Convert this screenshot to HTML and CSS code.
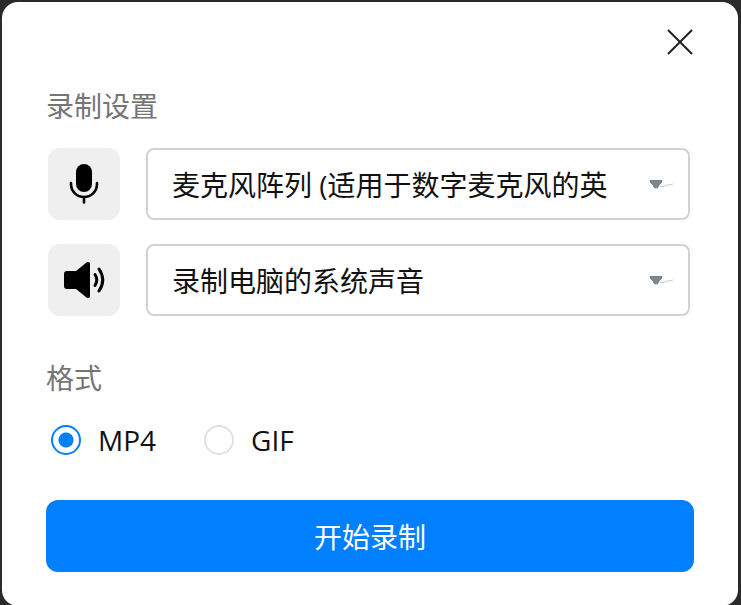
FILE: index.html
```
<!DOCTYPE html>
<html lang="zh-CN">
<head>
  <meta charset="UTF-8" />
  <meta name="viewport" content="width=device-width, initial-scale=1.0" />
  <title>录制设置</title>
  <link rel="stylesheet" href="styles.css">
</head>
<body>
  <form class="dialog">
    <div class="dialog-header">
      <button type="button" class="close" aria-label="关闭">
        <svg width="26" height="26" viewBox="0 0 26 26" fill="none" stroke="#222" stroke-width="2">
          <path d="M1 1L25 25M25 1L1 25" />
        </svg>
      </button>
    </div>

    <h2 class="title">录制设置</h2>

    <div class="row">
      <button type="button" class="icon-button" aria-label="麦克风">
        <svg width="72" height="72" viewBox="0 0 72 72">
          <rect x="28" y="16" width="16" height="28" rx="8" />
          <path d="M23 35V36C23 43.500 29 49 36 49S49 43.500 49 36V35M36 49V54.500" fill="none" stroke="#000" stroke-width="2.600" stroke-linecap="round" />
        </svg>
      </button>
      <div class="select-box">
        <select class="select" aria-label="麦克风设备">
          <option>麦克风阵列 (适用于数字麦克风的英特尔® 智音技术)</option>
        </select>
        <svg class="arrow" width="26" height="12" viewBox="0 0 26 12">
          <path d="M2 1H14V4H13V5H12V6H11V8H10V9H6V8H5V6H4V5H3V4H2Z" fill="#7d8791" />
          <path d="M1 1.500H2M14 1.500H15M6 9.500H10" stroke="#dfe2e4" />
          <path d="M12 7L15 7.500L20 6L25 5" fill="none" stroke="#c9cccf" />
        </svg>
      </div>
    </div>

    <div class="row">
      <button type="button" class="icon-button" aria-label="系统声音">
        <svg width="72" height="72" viewBox="0 0 72 72">
          <path d="M19 27H28L38.500 18.500C40 17.300 42 18 42 20V52C42 54 40 54.700 38.500 53.500L28 45H19C17 45 16 44 16 42V30C16 28 17 27 19 27Z" />
          <path d="M47 30.500Q50.500 36 47 41.500M51 25Q58.500 36 51 47" fill="none" stroke="#000" stroke-width="3" stroke-linecap="round" />
        </svg>
      </button>
      <div class="select-box">
        <select class="select" aria-label="声音来源">
          <option>录制电脑的系统声音</option>
        </select>
        <svg class="arrow" width="26" height="12" viewBox="0 0 26 12">
          <path d="M2 1H14V4H13V5H12V6H11V8H10V9H6V8H5V6H4V5H3V4H2Z" fill="#7d8791" />
          <path d="M1 1.500H2M14 1.500H15M6 9.500H10" stroke="#dfe2e4" />
          <path d="M12 7L15 7.500L20 6L25 5" fill="none" stroke="#c9cccf" />
        </svg>
      </div>
    </div>

    <h2 class="title title-format">格式</h2>

    <div class="formats">
      <label class="format" for="mp4">
        <input type="radio" id="mp4" name="format" value="mp4" checked />
        MP4
      </label>
      <label class="format" for="gif">
        <input type="radio" id="gif" name="format" value="gif" />
        GIF
      </label>
    </div>

    <button type="button" class="start">开始录制</button>
  </form>
</body>
</html>
```
FILE: styles.css
```
* {
  box-sizing: border-box;
}
body {
  margin: 0;
  padding: 2px 3px 0 2px;
  background-color: #2a2a2a;
  font-family: "Open Sans", "Noto Sans CJK SC", sans-serif;
  font-size: 28px;
  overflow: hidden;
}
.dialog {
  padding: 26px 44px 34px;
  background-color: white;
  border-radius: 16px;
}
.dialog-header {
  display: flex;
  justify-content: flex-end;
}
.close {
  display: flex;
  padding: 1px;
  background: none;
  border: none;
  cursor: pointer;
}
.title {
  margin: 28px 0 20px;
  color: #757575;
  font-size: 28px;
  font-weight: 400;
  line-height: 44px;
}
.row {
  display: flex;
  gap: 26px;
  margin: 0 4px 24px 2px;
}
.icon-button {
  display: flex;
  width: 72px;
  height: 72px;
  padding: 0;
  background-color: #efefef;
  border: none;
  border-radius: 12px;
}
.select-box {
  position: relative;
  flex: 1;
  min-width: 0;
}
.select {
  appearance: none;
  width: 100%;
  height: 72px;
  padding: 2px 80px 0 24px;
  background-color: white;
  border: 2px solid #d2d2d2;
  border-radius: 8px;
  color: #111;
  font-family: inherit;
  font-size: 28px;
}
.arrow {
  position: absolute;
  top: 31px;
  right: 16px;
  pointer-events: none;
}
.title-format {
  margin: 40px 0 20px;
}
.formats {
  display: flex;
  gap: 48px;
  padding: 0 5px;
}
.format {
  display: flex;
  align-items: center;
  gap: 17px;
  color: #111;
  line-height: 40px;
}
.format input {
  appearance: none;
  width: 30px;
  height: 30px;
  margin: 0;
  border: 2px solid #e0e1e2;
  border-radius: 50%;
}
.format input:checked {
  border-color: #0080ff;
  background: radial-gradient(circle, #0080ff 7px, transparent 8px);
}
.start {
  display: block;
  width: 100%;
  height: 72px;
  margin-top: 40px;
  background-color: #0080ff;
  color: white;
  border: none;
  border-radius: 12px;
  font-family: inherit;
  font-size: 28px;
  font-weight: 400;
  cursor: pointer;
}
```
